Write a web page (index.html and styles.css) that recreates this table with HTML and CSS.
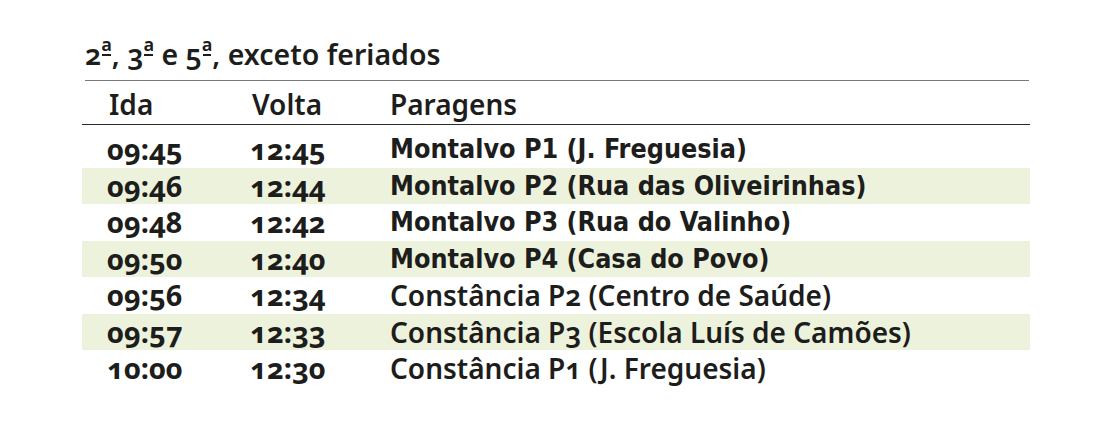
FILE: index.html
```html
<!DOCTYPE html>
<html lang="pt">
<head>
<meta charset="utf-8">
<link rel="stylesheet" href="styles.css">
</head>
<body>
<section class="schedule">
  <h2 class="title">2<span class="ord">ª</span>, 3<span class="ord">ª</span> e 5<span class="ord">ª</span>, exceto feriados</h2>
  <div class="head">
    <span>Ida</span><span>Volta</span><span>Paragens</span>
  </div>
  <div class="rows">
    <div class="row"><span class="t">09:45</span><span class="t">12:45</span><span class="stop narrow">Montalvo P1 (J. Freguesia)</span></div>
    <div class="row alt"><span class="t">09:46</span><span class="t">12:44</span><span class="stop narrow">Montalvo P2 (Rua das Oliveirinhas)</span></div>
    <div class="row"><span class="t">09:48</span><span class="t">12:42</span><span class="stop narrow">Montalvo P3 (Rua do Valinho)</span></div>
    <div class="row alt"><span class="t">09:50</span><span class="t">12:40</span><span class="stop narrow">Montalvo P4 (Casa do Povo)</span></div>
    <div class="row"><span class="t">09:56</span><span class="t">12:34</span><span class="stop">Constância P2 (Centro de Saúde)</span></div>
    <div class="row alt"><span class="t">09:57</span><span class="t">12:33</span><span class="stop">Constância P3 (Escola Luís de Camões)</span></div>
    <div class="row"><span class="t">10:00</span><span class="t">12:30</span><span class="stop">Constância P1 (J. Freguesia)</span></div>
  </div>
</section>
</body>
</html>
```

FILE: styles.css
```css
html, body {
  margin: 0;
  padding: 0;
  background: #ffffff;
}
body {
  color: #1d1d1b;
  font-family: "Noto Sans", "Open Sans", sans-serif;
  font-weight: 600;
  font-stretch: semi-condensed;
  font-variant-numeric: oldstyle-nums;
}
.schedule {
  width: 948px;
  margin-left: 82px;
  padding-top: 36px;
}
.title {
  margin: 0 1px 0 3px;
  font-size: 28.5px;
  font-weight: 600;
  line-height: 36px;
  padding-bottom: 8px;
  border-bottom: 1px solid #7a7a7a;
}
.ord {
  position: relative;
  line-height: 0;
  vertical-align: 3px;
}
.ord::after {
  content: "";
  position: absolute;
  left: 1px;
  right: 1px;
  top: 0.77em;
  height: 2px;
  background: currentColor;
}
.head {
  display: grid;
  grid-template-columns: 143px 138px 1fr;
  padding-left: 27px;
  height: 43px;
  line-height: 47px;
  font-size: 28px;
  border-bottom: 1px solid #2a2a2a;
}
.rows {
  padding-top: 6px;
}
.row {
  display: grid;
  grid-template-columns: 143px 140px 1fr;
  padding-left: 25px;
  height: 36.5px;
  line-height: 36px;
  font-size: 28px;
  align-items: center;
}
.row.alt {
  background: #edf2dd;
}
.t {
  font-weight: 700;
  font-size: 29px;
}
.narrow {
  font-family: "DejaVu Sans Condensed", "DejaVu Sans", sans-serif;
  font-stretch: condensed;
  font-weight: 700;
  font-variant-numeric: normal;
  font-size: 26.7px;
}
```
